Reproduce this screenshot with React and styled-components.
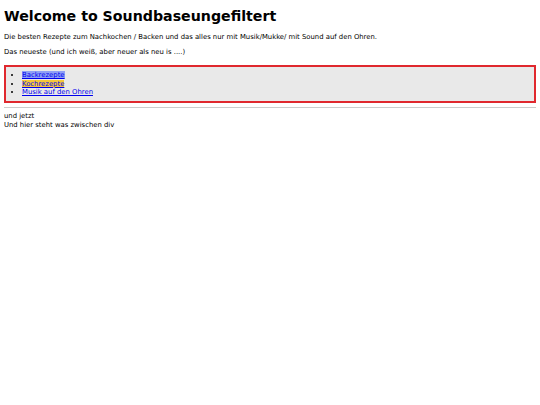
import React from 'react'
import styled, { createGlobalStyle } from 'styled-components';

const GlobalStyle = createGlobalStyle`
    body {
        margin: 4px;
        background: #ffffff;
        color: #000000;
        font-family: Verdana, "DejaVu Sans", sans-serif;
        font-size: 6.85px;
    }
`;

const Title = styled.h1`
    font-size: 14.2px;
    font-weight: bold;
    line-height: 16px;
    margin: 4px 0 9px 0;
`;

const Text = styled.p`
    margin: 0 0 6px 0;
    line-height: 9px;
`;

const NewsBox = styled.div`
    border: 2px solid #e0282e;
    background-color: #e9e9e9;
    padding: 4.5px 0;
    margin-top: 7.5px;
`;

const List = styled.ul`
    margin: 0;
    padding-left: 16px;
    line-height: 8.5px;
`;

const Link = styled.a`
    color: #0000ee;
    text-decoration: underline;
    background-color: ${({ $mark }) => $mark || 'transparent'};
`;

const Rule = styled.hr`
    border: none;
    border-top: 1px solid #cccccc;
    margin: 4px 0 4px 0;
`;

const Line = styled.div`
    line-height: 9px;
`;

const App = () => {
    return (
        <>
            <GlobalStyle />
            <Title>Welcome to Soundbaseungefiltert</Title>
            <Text>Die besten Rezepte zum Nachkochen / Backen und das alles nur mit Musik/Mukke/ mit Sound auf den Ohren.</Text>
            <Text>Das neueste (und ich weiß, aber neuer als neu is ....)</Text>
            <NewsBox>
                <List>
                    <li><Link href="#" $mark="#8fa0f5">Backrezepte</Link></li>
                    <li><Link href="#" $mark="#f5c838">Kochrezepte</Link></li>
                    <li><Link href="#">Musik auf den Ohren</Link></li>
                </List>
            </NewsBox>
            <Rule />
            <Line>und jetzt</Line>
            <Line>Und hier steht was zwischen div</Line>
        </>
    )
}

export default App
